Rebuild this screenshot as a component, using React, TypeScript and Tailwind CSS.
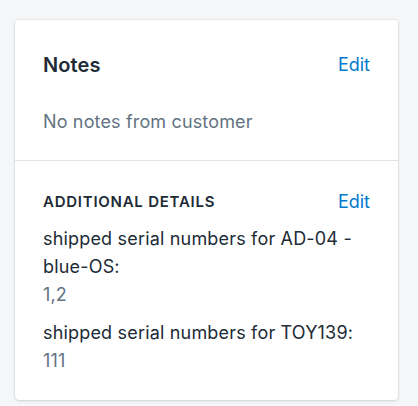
export default function App() {
  return (
    <div className="min-h-[406px] bg-[#f4f6f8] pt-[20px] pl-[15px] font-['Inter',sans-serif]">
      <div className="w-[383px] rounded-[4px] bg-white shadow-[0_0_0_1px_rgba(63,63,68,0.06),0_1px_3px_0_rgba(63,63,68,0.15)]">
        <div className="px-[28px] pt-[31px] pb-[24px]">
          <div className="flex items-center justify-between">
            <h2 className="text-[20px] leading-[28px] font-semibold tracking-[0.1px] text-[#212b36]">Notes</h2>
            <a className="text-[18px] leading-[28px] text-[#007ace]">Edit</a>
          </div>
          <p className="mt-[29px] text-[18px] leading-[28px] tracking-[0.15px] text-[#637381]">No notes from customer</p>
        </div>
        <div className="border-t border-[#dfe3e8] px-[28px] pt-[27px] pb-[25px]">
          <div className="flex items-center justify-between">
            <h3 className="text-[15px] leading-[20px] font-semibold uppercase tracking-[0.75px] text-[#212b36]">
              Additional details
            </h3>
            <a className="text-[18px] leading-[28px] text-[#007ace]">Edit</a>
          </div>
          <div className="mt-[9px] flex flex-col gap-[10px] text-[18px] leading-[28px] tracking-[0.18px]">
            <div>
              <p className="text-[#212b36]">shipped serial numbers for AD-04 - blue-OS:</p>
              <p className="text-[#637381]">1,2</p>
            </div>
            <div>
              <p className="text-[#212b36]">shipped serial numbers for TOY139:</p>
              <p className="text-[#637381]">111</p>
            </div>
          </div>
        </div>
      </div>
    </div>
  );
}
